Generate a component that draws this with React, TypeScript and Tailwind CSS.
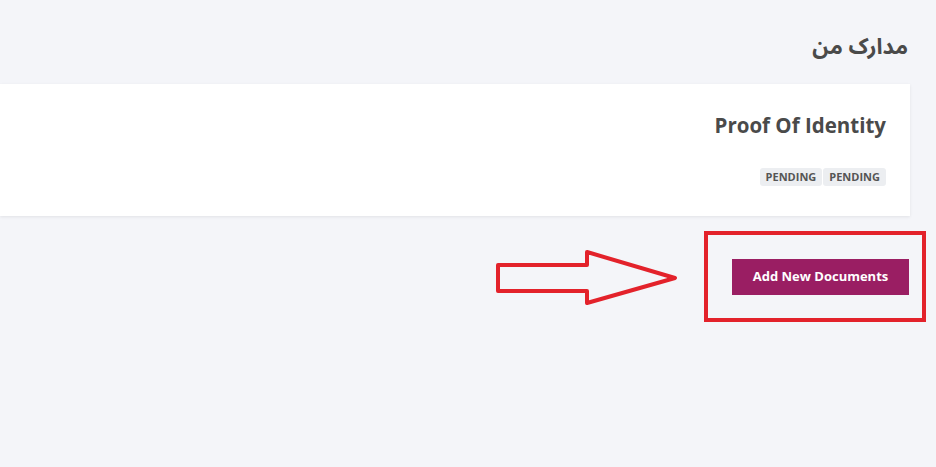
const font = { fontFamily: '"Open Sans", "DejaVu Sans", sans-serif' };

const AnnotationArrow = () => (
  <svg
    className="absolute left-[-237px] top-[-10px] pointer-events-none"
    width="186"
    height="58"
    viewBox="0 0 186 58"
    fill="none"
  >
    <polygon
      points="3,16 92,16 92,3 180,29 92,54 92,42 3,42"
      stroke="#e3222b"
      strokeWidth="4"
      strokeLinejoin="round"
    />
  </svg>
);

export default function App() {
  return (
    <div className="min-h-[467px] w-full bg-[#f4f5f9] pt-[33px] pr-[26px]" style={font}>
      <h2
        dir="rtl"
        className="pr-[2px] text-[22px] leading-[28px] font-bold text-[#4a4a4a] font-['Noto_Sans_Arabic','Noto_Naskh_Arabic','DejaVu_Sans',sans-serif]"
      >
        مدارک من
      </h2>

      <div className="mt-[23px] bg-white shadow-[0_1px_3px_rgba(0,0,0,0.08)] pt-[27px] pb-[30px] pr-[24px] flex flex-col items-end">
        <h3 className="text-[20.5px] leading-[28px] font-bold text-[#4a4a4a]">
          Proof Of Identity
        </h3>
        <div className="mt-[29px] flex gap-[1px]">
          <span className="h-[18px] px-[6px] rounded-[3px] bg-[#eceef1] text-[11px] leading-[18px] font-bold text-[#555]">
            PENDING
          </span>
          <span className="h-[18px] px-[6px] rounded-[3px] bg-[#eceef1] text-[11px] leading-[18px] font-bold text-[#555]">
            PENDING
          </span>
        </div>
      </div>

      <div className="mt-[43px] flex justify-end pr-[1px]">
        <div className="relative">
          <AnnotationArrow />
          <div className="absolute -left-[28px] -top-[28px] -right-[17px] -bottom-[27px] border-[4px] border-[#e3222b] pointer-events-none" />
          <button className="h-[36px] w-[177px] bg-[#9a1e63] text-white text-[13px] font-bold">
            Add New Documents
          </button>
        </div>
      </div>
    </div>
  );
}
